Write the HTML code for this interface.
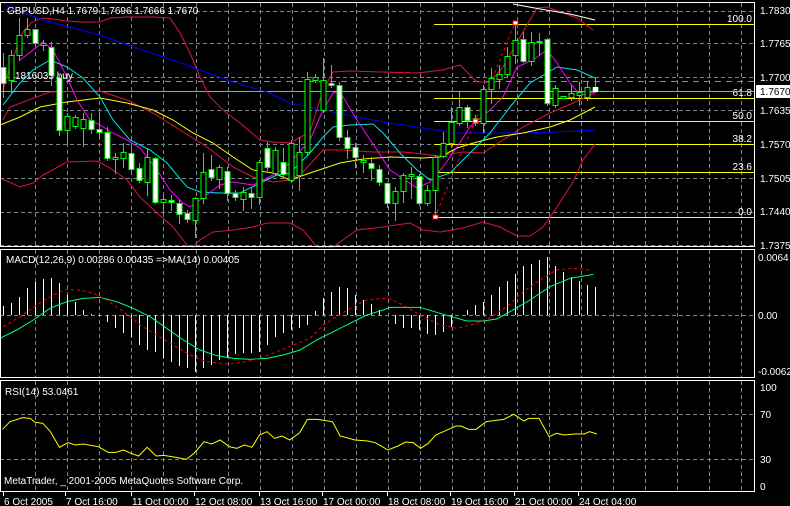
<!DOCTYPE html>
<html><head><meta charset="utf-8">
<style>
html,body{margin:0;padding:0;background:#000;width:790px;height:506px;overflow:hidden}
svg{display:block}
text{font-family:"Liberation Sans",sans-serif;font-size:10px;fill:#fff}
</style></head><body>
<svg id="s" width="790" height="506" xmlns="http://www.w3.org/2000/svg">
<rect width="790" height="506" fill="#000"/>
<g id="grid"></g>
<g stroke="#ffff00" stroke-width="1">
<line x1="434" y1="24.5" x2="754" y2="24.5"/>
<line x1="434" y1="98.5" x2="754" y2="98.5"/>
<line x1="434" y1="121.5" x2="754" y2="121.5"/>
<line x1="434" y1="144.5" x2="754" y2="144.5"/>
<line x1="434" y1="172.5" x2="754" y2="172.5"/>
<line x1="434" y1="217.5" x2="754" y2="217.5"/>
</g>
<g text-anchor="end">
<text x="752" y="22">100.0</text><text x="752" y="96">61.8</text><text x="752" y="119">50.0</text>
<text x="752" y="142">38.2</text><text x="752" y="170">23.6</text><text x="752" y="215">0.0</text>
</g>
<line x1="0" y1="81.5" x2="754" y2="81.5" stroke="#32cd32" stroke-dasharray="6,5"/>
<line x1="0" y1="91.5" x2="754" y2="91.5" stroke="#a0a0a8"/>
<g id="ind" fill="none" stroke-width="1"></g>
<g id="candles"></g>
<g id="macd"></g>
<g id="rsi"></g>
<g fill="none" stroke="#fff">
<rect x="0.5" y="2.5" width="754" height="244"/>
<rect x="0.5" y="249.5" width="754" height="128"/>
<rect x="0.5" y="380.5" width="754" height="111"/>
</g>
<text x="7" y="14">GBPUSD,H4  1.7679 1.7696 1.7666 1.7670</text>
<text x="15" y="79">1816033 buy</text>
<g>
<text x="760" y="14">1.7830</text><text x="760" y="47">1.7765</text><text x="760" y="81">1.7700</text>
<text x="760" y="114">1.7635</text><text x="760" y="148">1.7570</text><text x="760" y="182">1.7505</text>
<text x="760" y="215">1.7440</text><text x="760" y="249">1.7375</text>
</g>
<rect x="756" y="85" width="34" height="13" fill="#fff"/>
<text x="760" y="95" style="fill:#000">1.7670</text>
<text x="6" y="263">MACD(12,26,9) 0.00286 0.00435  =&gt;MA(14) 0.00405</text>
<text x="758" y="261">0.0064</text><text x="758" y="319">0.00</text><text x="758" y="375">-0.00623</text>
<text x="5" y="395">RSI(14) 53.0461</text>
<text x="4" y="484">MetaTrader, _ 2001-2005 MetaQuotes Software Corp.</text>
<text x="760" y="391">100</text><text x="760" y="418">70</text><text x="760" y="463">30</text><text x="760" y="490">0</text>
<g id="time"></g>
</svg>
<script>
var NS="http://www.w3.org/2000/svg";
function el(p,t,a){var e=document.createElementNS(NS,t);for(var k in a)e.setAttribute(k,a[k]);p.appendChild(e);return e;}
var g=document.getElementById('grid');
var gs={stroke:"#7a8590","stroke-dasharray":"4,3","stroke-width":1};
for(var k=0;k<23;k++){var x=Math.round(35+32.1*k)+.5;
 [[3,247],[250,378],[381,492]].forEach(function(r){var a=Object.assign({x1:x,x2:x,y1:r[0],y2:r[1]},gs);el(g,'line',a);});}
[11,43,77,110,144,178,212,245,315,414,459].forEach(function(y){el(g,'line',Object.assign({x1:0,x2:754,y1:y+.5,y2:y+.5},gs));});
function pl(id,pts,col,dash){var p=document.getElementById(id);
 var s=pts.map(function(q){return q[0]+','+q[1];}).join(' ');
 var a={points:s,stroke:col,fill:"none"};if(dash)a["stroke-dasharray"]=dash;el(p,'polyline',a);}
pl('ind',[[3,90],[12,60],[23,32],[32,22],[43,18],[53,19],[67,21],[80,22],[100,22],[110,18],[127,17],[153,17],[170,18],[180,33],[190,53],[200,77],[210,97],[223,110],[240,123],[260,140],[273,142],[290,143],[310,132],[323,90],[333,72],[350,71],[383,72],[417,73],[443,70],[460,65],[477,82],[490,82],[503,67],[520,37],[537,8],[547,7],[577,18],[593,30]],"#dc143c");
pl('ind',[[0,178],[20,187],[33,183],[43,175],[67,162],[97,161],[110,168],[127,180],[140,197],[157,213],[173,227],[187,245],[193,247],[200,240],[213,232],[233,230],[253,227],[267,223],[290,223],[303,230],[317,247],[333,247],[357,230],[383,227],[410,223],[423,230],[440,232],[463,228],[483,222],[500,227],[517,236],[530,236],[543,227],[557,207],[573,182],[583,160],[595,144]],"#dc143c");
pl('ind',[[3,120],[10,107],[50,92],[100,91],[127,100],[153,113],[180,130],[207,147],[233,167],[253,177],[273,182],[290,180],[303,172],[323,150],[343,150],[373,152],[403,152],[423,154],[437,156],[463,152],[483,153],[503,140],[523,127],[550,113],[573,103],[595,93]],"#dc143c");
pl('ind',[[3,2],[10,8],[43,20],[100,35],[133,47],[167,58],[200,70],[233,82],[267,92],[290,103],[323,110],[357,117],[390,123],[423,128],[457,133],[490,133],[523,133],[557,132],[595,130]],"#0000ff");
pl('ind',[[0,125],[20,117],[40,107],[67,102],[100,98],[127,103],[153,110],[173,120],[193,133],[213,143],[233,157],[253,170],[273,173],[290,180],[310,173],[340,163],[363,159],[390,157],[423,158],[440,157],[457,148],[477,142],[497,137],[523,133],[550,127],[570,120],[595,107]],"#ffff00");
pl('ind',[[3,105],[20,83],[33,70],[50,60],[67,67],[83,78],[100,97],[113,120],[130,140],[150,150],[167,163],[187,187],[200,192],[220,193],[240,193],[260,183],[277,175],[290,173],[310,153],[323,137],[333,127],[350,125],[373,124],[383,133],[400,153],[417,170],[430,180],[450,173],[470,153],[490,133],[510,107],[530,83],[557,67],[577,70],[595,78]],"#00e5ee");
pl('ind',[[20,60],[33,50],[43,42],[53,50],[67,77],[77,100],[90,120],[100,125],[113,133],[127,140],[140,148],[157,170],[170,190],[183,203],[190,207],[200,200],[220,185],[233,182],[253,185],[263,180],[277,173],[290,163],[310,140],[323,110],[333,93],[340,92],[357,120],[377,150],[390,170],[417,188],[430,182],[443,167],[457,147],[470,127],[490,110],[503,97],[517,67],[533,60],[547,50],[557,63],[570,83],[580,95],[595,92]],"#ff00ff");
pl('ind',[[513,4],[540,9],[570,14],[595,20]],"#ffffff");
pl('ind',[[435,217],[475,121],[515,23]],"#ff0000","3,3");
var C=[[67,83,53,97,1],[55,80,50,92,0],[35,55,18,60,0],[29,35,18,37,0],[29,43,29,45,1],[43,45,40,50,0],[47,75,42,85,1],[78,130,75,135,1],[116,130,113,142,0],[117,126,115,128,0],[119,128,113,146,0],[120,129,113,133,1],[129,132,112,137,1],[132,158,127,160,1],[157,159,153,173,0],[152,158,143,167,0],[153,169,147,170,1],[168,180,163,182,1],[157,182,148,195,0],[158,202,157,203,1],[199,202,195,212,0],[200,202,195,210,1],[203,214,200,223,1],[213,219,210,222,1],[198,220,197,237,0],[172,198,153,203,0],[169,177,155,180,1],[167,179,165,188,0],[171,193,167,200,1],[193,197,190,200,1],[192,199,187,210,0],[193,197,188,208,1],[162,197,160,204,0],[148,167,142,170,1],[150,173,147,175,0],[162,174,148,176,1],[143,180,140,182,0],[152,175,137,190,0],[79,152,72,155,0],[77,80,74,82,0],[80,110,58,112,0],[83,85,65,87,1],[85,137,82,140,1],[137,148,130,158,1],[147,157,143,167,1],[160,162,155,172,0],[163,168,157,180,1],[169,182,165,185,1],[183,203,182,207,1],[191,203,187,220,0],[175,191,173,202,0],[174,176,167,198,0],[176,203,174,205,1],[190,203,185,205,0],[157,190,155,217,0],[143,156,132,157,0],[122,143,107,147,0],[107,123,92,125,0],[107,120,105,127,1],[118,123,115,125,1],[89,123,85,132,0],[78,89,68,103,0],[74,79,65,88,0],[56,74,47,77,0],[40,55,23,63,0],[39,61,32,62,1],[42,61,32,65,0],[41,42,33,55,1],[39,103,38,105,1],[88,105,85,107,0],[96,98,96,98,0],[93,97,85,100,0],[92,95,82,105,0],[87,97,81,100,0],[87,91,78,92,1]];
var cg=document.getElementById('candles');
C.forEach(function(c,i){var x=3+8*i;
 el(cg,'line',{x1:x+.5,x2:x+.5,y1:c[2],y2:c[3]+1,stroke:"#00ff00"});
 el(cg,'rect',{x:x-2,y:c[0]+.5,width:5,height:Math.max(1,c[1]-c[0]),fill:c[4]?"#fff":"#000",stroke:"#00ff00"});});
[[435,217],[475,121],[515,23]].forEach(function(p){el(cg,'rect',{x:p[0]-2,y:p[1]-2,width:5,height:4,fill:"#fff",stroke:"#ff0000"});});
el(cg,'rect',{x:593,y:87,width:5,height:5,fill:"#fff"});
var M=[306,303,297,288,282,279,278,283,295,302,310,314,316,
322,328,333,337,345,350,352,358,362,366,368,372,368,365,360,358,354,353,353,352,345,337,333,330,328,325,
311,298,292,287,288,295,300,304,310,315,
324,328,328,330,334,335,332,327,315,310,305,302,295,287,281,274,266,264,260,257,266,272,277,281,285,287];
var mg=document.getElementById('macd');
M.forEach(function(v,i){var x=3+8*i+.5;el(mg,'line',{x1:x,x2:x,y1:Math.min(v,315),y2:Math.max(v,315),stroke:"#fff"});});
function mp(a,off){return a.map(function(q){return [q[0]/3+off,245+q[1]/3];});}
pl('macd',mp([[0,280],[50,255],[100,225],[150,190],[200,170],[250,160],[300,157],[350,170],[400,190],[450,215],[500,250],[550,285],[600,315],[650,332],[700,340],[750,343],[800,340],[850,330],[900,315],[950,285],[1000,260],[1050,235],[1100,210],[1150,195],[1170,187]],0).concat(mp([[0,187],[90,187],[150,205],[230,228],[280,228],[320,222],[360,200],[420,165],[480,125],[540,100],[610,88]],390)),"#00ff7f");
pl('macd',mp([[10,245],[60,215],[110,180],[160,150],[200,133],[240,135],[280,145],[320,165],[370,200],[420,240],[470,270],[520,300],[570,330],[620,350],[680,357],[740,350],[780,340],[830,320],[880,300],[930,280],[970,240],[1010,215],[1060,185],[1100,165],[1150,160],[1170,162]],0).concat(mp([[0,162],[40,180],[90,210],[150,240],[200,250],[250,238],[300,218],[350,185],[400,140],[450,105],[500,75],[550,70],[600,75]],390)),"#ff0000","3,3");
var R=[[5,178],[20,155],[45,143],[60,145],[70,157],[85,160],[100,185],[118,232],[135,218],[150,225],[165,222],[195,230],[215,247],[230,247],[245,240],[260,250],[275,258],[292,232],[310,258],[325,256],[350,262],[370,268],[385,250],[405,215],[420,222],[437,210],[455,230],[470,235],[485,225],[500,232],[515,195],[530,185],[545,205],[560,198],[575,210],[595,188],[610,148],[630,148],[660,155],[675,198],[705,210],[730,213],[745,218],[770,240],[790,228],[805,216],[820,218],[835,235],[850,220],[865,195],[880,185],[905,168],[915,168],[930,178],[945,178],[965,155],[990,150],[1000,148],[1020,133],[1040,153],[1050,145],[1070,145],[1090,200],[1105,190],[1120,195],[1140,192],[1160,192],[1170,185],[1185,192]];
pl('rsi',R.map(function(q){return [q[0]/1.985,370+q[1]/3];}),"#ffff00");
var T=[[3,"6 Oct 2005"],[65,"7 Oct 16:00"],[131,"11 Oct 00:00"],[194,"12 Oct 08:00"],[259,"13 Oct 16:00"],[322,"17 Oct 00:00"],[387,"18 Oct 08:00"],[450,"19 Oct 16:00"],[514,"21 Oct 00:00"],[578,"24 Oct 04:00"]];
var tg=document.getElementById('time');
T.forEach(function(t){el(tg,'line',{x1:t[0]+.5,x2:t[0]+.5,y1:492,y2:496,stroke:"#fff"});var e=el(tg,'text',{x:t[0]+1,y:505});e.textContent=t[1];});
</script>
</body></html>
